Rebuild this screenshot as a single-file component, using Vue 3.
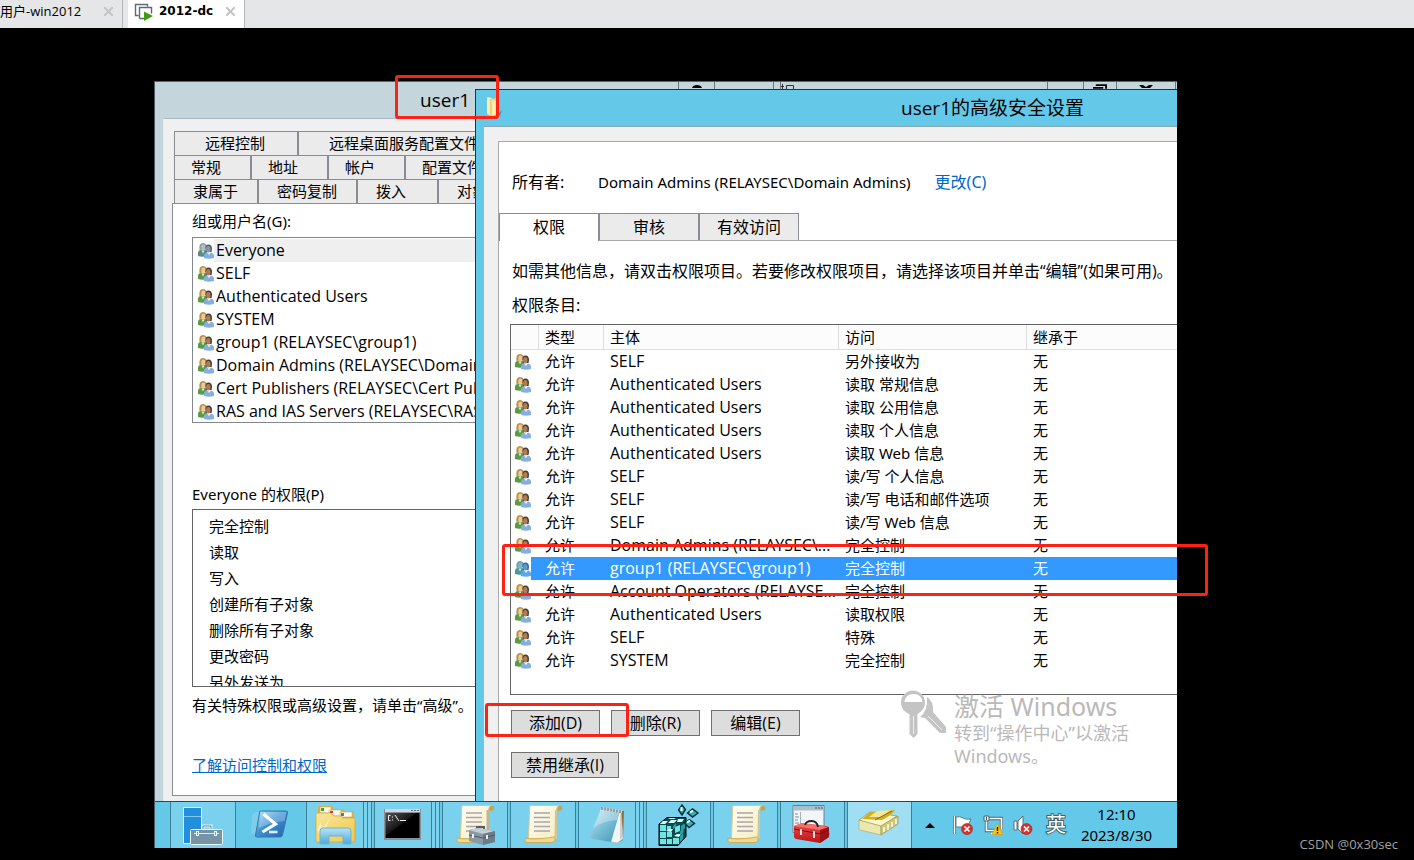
<script setup>
const groups = [
  'Everyone',
  'SELF',
  'Authenticated Users',
  'SYSTEM',
  'group1 (RELAYSEC\\group1)',
  'Domain Admins (RELAYSEC\\Domain',
  'Cert Publishers (RELAYSEC\\Cert Pub',
  'RAS and IAS Servers (RELAYSEC\\RAS'
]

const permissions = ['完全控制', '读取', '写入', '创建所有子对象', '删除所有子对象', '更改密码', '另外发送为']

const propertyTabs = [
  [{ t: '远程控制', c: 'w124' }, { t: '远程桌面服务配置文件', c: 'rest' }],
  [{ t: '常规', c: 'w77' }, { t: '地址', c: 'w77' }, { t: '帐户', c: 'w77' }, { t: '配置文件', c: 'rest' }],
  [{ t: '隶属于', c: 'w84' }, { t: '密码复制', c: 'w99' }, { t: '拨入', c: 'w81' }, { t: '对象', c: 'rest' }]
]

const securityTabs = ['权限', '审核', '有效访问']

const entries = [
  ['SELF', '另外接收为'],
  ['Authenticated Users', '读取 常规信息'],
  ['Authenticated Users', '读取 公用信息'],
  ['Authenticated Users', '读取 个人信息'],
  ['Authenticated Users', '读取 Web 信息'],
  ['SELF', '读/写 个人信息'],
  ['SELF', '读/写 电话和邮件选项'],
  ['SELF', '读/写 Web 信息'],
  ['Domain Admins (RELAYSEC\\...', '完全控制'],
  ['group1 (RELAYSEC\\group1)', '完全控制'],
  ['Account Operators (RELAYSE...', '完全控制'],
  ['Authenticated Users', '读取权限'],
  ['SELF', '特殊'],
  ['SYSTEM', '完全控制']
]
const selectedEntry = 9

const tasks = [
  { icon: 'i-server', label: '服务器管理器', c: 'wide' },
  { icon: 'i-shell', label: 'Windows PowerShell', c: 'pinned' },
  { icon: 'i-folder', label: '文件资源管理器', c: 'narrow', stack: true },
  { icon: 'i-term', label: '命令提示符', c: 'narrow', stack: true },
  { icon: 'i-script', label: '组策略管理', c: 'wide' },
  { icon: 'i-paper', label: '组策略编辑器', c: 'wide' },
  { icon: 'i-note', label: '记事本', c: 'narrow', stack: true },
  { icon: 'i-reg', label: '注册表编辑器', c: '' },
  { icon: 'i-paper', label: '组策略编辑器', c: '' },
  { icon: 'i-mmc', label: '管理控制台', c: '' },
  { icon: 'i-adsi', label: 'Active Directory 用户和计算机', c: 'active' }
]
</script>

<template>
  <div class="app">
    <svg class="defs" aria-hidden="true">
      <defs>
        <linearGradient id="g-shell" x1="0" y1="0" x2="1" y2="1">
          <stop offset="0" stop-color="#a9dcf5" /><stop offset=".45" stop-color="#3f93d2" /><stop offset="1" stop-color="#1e5fae" />
        </linearGradient>
        <linearGradient id="g-folder" x1="0" y1="0" x2="1" y2="1">
          <stop offset="0" stop-color="#f8e79a" /><stop offset="1" stop-color="#eec850" />
        </linearGradient>
        <linearGradient id="g-holder" x1="0" y1="0" x2="0" y2="1">
          <stop offset="0" stop-color="#b9e3f2" /><stop offset="1" stop-color="#4ba9dc" />
        </linearGradient>
        <linearGradient id="g-paper" x1="0" y1="0" x2="1" y2="1">
          <stop offset="0" stop-color="#fffef4" /><stop offset="1" stop-color="#f6edc0" />
        </linearGradient>
        <linearGradient id="g-note" x1="0" y1="0" x2="1" y2="1">
          <stop offset="0" stop-color="#d6eff5" /><stop offset=".5" stop-color="#7cc0d6" /><stop offset="1" stop-color="#3f93b5" />
        </linearGradient>
        <linearGradient id="g-red" x1="0" y1="0" x2="0" y2="1">
          <stop offset="0" stop-color="#ee4a44" /><stop offset="1" stop-color="#b9151b" />
        </linearGradient>
        <linearGradient id="g-term" x1="0" y1="0" x2="1" y2="1">
          <stop offset="0" stop-color="#555" /><stop offset=".45" stop-color="#161616" /><stop offset=".46" stop-color="#000" />
        </linearGradient>
      </defs>
      <symbol id="i-users" viewBox="0 0 16 16">
        <path class="shirt-a" d="M0 13V10q0-3 3-3h4q2 0 2 3v3q-5 1.500-9 0z" />
        <path d="M3.500 7.500l1.500 3 1.500-3z" fill="#e4ecd6" />
        <path class="hair-a" d="M1.500 7Q.5 0 5 0t4 6z" />
        <ellipse class="skin-a" cx="5.400" cy="4.500" rx="2.100" ry="3" />
        <path class="hair-b" d="M7.500 6Q7 1.500 10.500 1.500T14 6l-.5 3H8z" />
        <ellipse class="skin-b" cx="10.300" cy="6.300" rx="2.200" ry="3.200" />
        <path class="shirt-b" d="M6 15v-2.500q0-2.500 3-3l2 1.500 2-1.500q3 .5 3 3.500v2q-5 1.500-10 0z" />
        <path d="M9.500 9.700l1.500 2.500 1.500-2.500-1.500 1z" fill="#eef5fc" />
      </symbol>
      <symbol id="i-server" viewBox="0 0 46 46">
        <path d="M3.500 5.500h18v36h-18z" fill="#218fdc" stroke="#d5f0fa" />
        <path d="M4 14.500h17" stroke="#7ccaf2" />
        <path d="M23 27v-3h8v3" fill="none" stroke="#e8f4f8" stroke-width="3" />
        <path d="M23 27v-3h8v3" fill="none" stroke="#66879a" />
        <rect x="10.500" y="27.500" width="32" height="15" rx="1" fill="#7594a8" stroke="#eef7fa" />
        <path d="M14 31.500h25" stroke="#dce9ef" />
        <path d="M17.500 29v5M35.500 29v5" stroke="#e9fbff" stroke-width="3" />
        <path d="M17.500 30v3M35.500 30v3" stroke="#57a9c9" />
      </symbol>
      <symbol id="i-shell" viewBox="0 0 46 46">
        <path d="M4 13q3-3 7-3l-3 22q-3 1-5-1z" fill="#8ed0ee" opacity=".6" />
        <path d="M12 9h26q2 0 1.500 2l-5 22q-.5 2-2.500 2h-23q-2 0-1.500-2l4-22q.3-2 .5-2z" fill="url(#g-shell)" stroke="#3978a8" />
        <path d="M12.500 10h26l-2 9q-12 1-26 7z" fill="#fff" opacity=".25" />
        <path d="M15.500 12l12 10-13 8" fill="none" stroke="#fff" stroke-width="3.200" />
        <path d="M21 30h8.500" stroke="#d7eefb" stroke-width="2.600" />
      </symbol>
      <symbol id="i-folder" viewBox="0 0 46 46">
        <path d="M6 11V5q0-1 1-1h13l2 3h9l2 2h8q1 0 1 1v8H6z" fill="#dcae3f" />
        <path d="M8 5h11v6H8zM17 8h12v6H17zM28 10h12v5H28z" fill="#fffdf0" stroke="#d3b15b" stroke-width=".7" />
        <path d="M9 6h3v3H9z" fill="#2ca84a" /><path d="M18 9h3v2h-3z" fill="#e2322e" /><path d="M29 11h3v3h-3z" fill="#2787c8" />
        <path d="M4 12q0-1 1-1h14l3 3h7l2 2h11q1 0 1 1v22q0 1-1 1H5q-1 0-1-1z" fill="url(#g-folder)" stroke="#cfa139" stroke-width=".7" />
        <path d="M5 28l4-8 1 7 8-11-5 12 6-2-11 6z" fill="#fff8cf" opacity=".7" />
        <path d="M8 42V29q0-3 3-3h25q3 0 3 3v13h-8v-8H17v8z" fill="url(#g-holder)" stroke="#6fb3d2" />
      </symbol>
      <symbol id="i-term" viewBox="0 0 46 46">
        <path d="M4 7h37v31H4z" fill="#8a8f98" /><path d="M5 7h35v3H5z" fill="#d3d6dd" />
        <path d="M31 8.500h2M34 8.500h2M37 8.500h2" stroke="#63697a" />
        <path d="M5.500 11h34v25h-34z" fill="url(#g-term)" />
        <path d="M10.500 13.500h-2v5h2M12.500 14.500v1M12.500 17.500v1M15 13l4 6M20 18.500h6" fill="none" stroke="#eee" />
      </symbol>
      <symbol id="i-paper" viewBox="0 0 46 46">
        <path d="M36 4h4q3 0 2 4l-4 1z" fill="#c8a24a" />
        <path d="M10 3.500h29q-2.500 1-2.500 5v28h-28l1-26q0-6 .5-7z" fill="url(#g-paper)" stroke="#dcc98b" />
        <path d="M35 8h1.500v27H34.500z" fill="#cfc2a0" />
        <path d="M5 36q8 2 26-.5V35h4v4l-3 1.500H7q-2 0-2-2z" fill="#f0d987" stroke="#c6a356" stroke-width=".8" />
        <path d="M14 11h16M14 15.500h16M14 20h16M14 24.500h16M14 29h16" stroke="#aaa4ae" stroke-width="1.600" />
      </symbol>
      <symbol id="i-script" viewBox="0 0 46 46">
        <path d="M36 4h4q3 0 2 4l-4 1z" fill="#c8a24a" />
        <path d="M10 3.500h29q-2.500 1-2.500 5v28h-28l1-26q0-6 .5-7z" fill="url(#g-paper)" stroke="#dcc98b" />
        <path d="M34.500 8h3v27h-3z" fill="#bfb496" />
        <path d="M5 36q8 2 26-.5V35h4v4l-3 1.500H7q-2 0-2-2z" fill="#f0d987" stroke="#c6a356" stroke-width=".8" />
        <path d="M14 11h16M14 15.500h16M14 20h16M14 24.500h16M14 29h6" stroke="#aaa4ae" stroke-width="1.600" />
        <path d="M25 29v-4h7v3" fill="none" stroke="#555e66" stroke-width="2" />
        <path d="M17 28l9-2 17 3v11l-12 3-14-4z" fill="#8a99a5" />
        <path d="M17 28l9-2 17 3-12 3z" fill="#c3cdd4" /><path d="M31 32l12-3v11l-12 3z" fill="#6c7b88" />
        <path d="M17 33l14 3 12-3" fill="none" stroke="#4e5963" /><path d="M21 32v4M35 33v4" stroke="#eef2f4" stroke-width="2" />
      </symbol>
      <symbol id="i-note" viewBox="0 0 46 46">
        <path d="M34 9h6l-1 29-4 2z" fill="#9b6d2e" />
        <path d="M18 8l19 2 2 27-6 4-15-3z" fill="#f2f5f6" stroke="#a9b6bd" stroke-width=".7" />
        <path d="M36 14v24l2-2-1-24z" fill="#c5ccd0" />
        <path d="M17 6l19 3-9 31-23-4q8-12 13-30z" fill="url(#g-note)" />
        <path d="M17 6l19 3-3 9q-14 1-24 8z" fill="#fff" opacity=".3" />
        <path d="M17 5l21 3v3l-21-3z" fill="#d5d8d9" />
        <path d="M18 5v3M21 5.500v3M24 6v3M27 6.500v3M30 7v3M33 7.500v3M36 8v3" stroke="#5a6265" />
      </symbol>
      <symbol id="i-reg" viewBox="0 0 46 46">
        <path d="M3 22l8-6.500h19v19L22 43.500H3z" fill="#0d4a50" stroke="#000" />
        <g fill="#6fe6e2">
          <path d="M4 23h6v6H4zM4 30h6v6H4zM4 37h6v5H4zM11 30h5v5h-5zM11 37h5v5h-5zM17 36h6v6h-6zM11 24h4v4h-4z" />
          <path d="M19 25l5-2v6l-5 2z" />
        </g>
        <g fill="#d6fffc"><path d="M4 22l3-3h5l-3 3zM12 21l3-3h6l-3 3zM12 17l2-1h6l-2 1zM22 17h6l-2 3h-5zM10 29l3-2h4l-2 3zM18 34l3-2h4l-2 3z" /></g>
        <g fill="#23a3a8"><path d="M24 34l3-3v6l-3 3zM25 24l4-3v5l-4 3zM17 24l3-3v4l-3 2zM24 29l4-2-1 4-3 2z" /></g>
        <g fill="#2fb3ba" stroke="#0b2b33" stroke-width="1.400">
          <path d="M26 3l3.500 4.500L26 13l-3.500-5z" /><path d="M31.500 11l5-4 5.500 4-5.500 4z" /><path d="M28.500 21l5-3.500 5 4-5.500 4z" />
        </g>
        <path d="M25.500 5v4M34 10.500l3-2M31 20.500l3-2" stroke="#eaffff" stroke-width="2" />
      </symbol>
      <symbol id="i-mmc" viewBox="0 0 46 46">
        <path d="M3 3.500h31v27H3z" fill="#f3f6f9" stroke="#6d7f91" />
        <path d="M3.500 4h30v4.500h-30z" fill="#aebccb" /><path d="M25 6h2M28 6h2M31 6h2" stroke="#4b5968" />
        <path d="M10.500 10v20" stroke="#a8b4bf" /><path d="M5 12h3M5 15h4M5 18h3M5 21h4" stroke="#7c8a97" />
        <path d="M36 29q6 1 3 5l-6 4z" fill="#2e7896" opacity=".5" />
        <path d="M4 24l8-3 25 3q2 1 2 2v9l-9 6-24-4q-2-1-2-2z" fill="url(#g-red)" />
        <path d="M4 24l8-3 26 4-8 3z" fill="#f4716a" /><path d="M30 28l9-3v10l-9 6z" fill="#9f1118" />
        <path d="M15 23q1-4 6.500-4t6.500 6" fill="none" stroke="#222" stroke-width="1.800" />
        <path d="M4 27l26 5 9-4" fill="none" stroke="#7d0c12" /><path d="M11 27v6M24 29v7" stroke="#e5dcdc" stroke-width="2" />
      </symbol>
      <symbol id="i-adsi" viewBox="0 0 46 46">
        <path d="M2 18l22 5v10L3 28q-1 0-1-1z" fill="#ece7ae" stroke="#b5ac66" stroke-width=".7" />
        <path d="M24 23l17-9v8L24 33z" fill="#cfc77c" stroke="#a1974e" stroke-width=".7" />
        <path d="M2 18L13 10l27 4-16 10z" fill="#fbf7cc" stroke="#9e913d" stroke-width=".7" />
        <path d="M5 17l8-7 25-2q-3 5-13 10z" fill="#d3ae1c" /><path d="M12 15l8-6 14-1-10 7z" fill="#f3e59b" />
        <path d="M18 18l17-9" stroke="#82701a" /><path d="M27 25v5M31 22v6M35 20v5M39 17v5" stroke="#fffde4" stroke-width="1.500" />
      </symbol>
    </svg>

    <nav class="strip" aria-label="虚拟机">
      <div class="vm vm-rest"><a href="#">用户-win2012</a><button class="close" aria-label="关闭"><svg viewBox="0 0 9 9"><path d="M0 0l9 9M9 0L0 9" /></svg></button></div>
      <div class="vm vm-on">
        <svg class="vm-icon" viewBox="0 0 20 20" aria-hidden="true">
          <path d="M4.500 13.500H1.500V2.500h12v2M5.500 16.500h5M5.500 16.500V5.500h12v6" fill="none" stroke="#5d6b76" stroke-width="1.400" />
          <path d="M10 9.500l9 4.500-9 5z" fill="#3f9c14" />
        </svg>
        <a href="#">2012-dc</a><button class="close" aria-label="关闭"><svg viewBox="0 0 9 9"><path d="M0 0l9 9M9 0L0 9" /></svg></button>
      </div>
    </nav>

    <main class="stage">
      <div class="screen">
        <div class="desktop">
          <section class="back">
            <header class="back-title">
              <h1>user1</h1>
              <span class="cap c36"><svg viewBox="0 0 14 3"><path d="M2 3q1-3 5-3t5 3z" /></svg></span>
              <span class="cap c59"></span><span class="cap c7"></span>
              <span class="cap grow"><svg viewBox="0 0 14 6" class="left"><path d="M1.500 1v5M5.500 6V2.500h7V6M0 3.500h3" fill="none" stroke="#333" /></svg></span>
              <span class="cap c36"></span>
              <span class="cap c33"><svg viewBox="0 0 15 5"><path d="M3 1h11v4M0 4h11" fill="none" stroke="#000" stroke-width="2" /></svg></span>
              <span class="cap c59"><svg viewBox="0 0 14 3"><path d="M0 0h4l3 2 3-2h4l-3 3H3z" /></svg></span>
              <span class="cap c2"></span>
            </header>
            <div class="back-body">
              <div class="rows" role="tablist">
                <div v-for="(row, i) in propertyTabs" :key="i" class="row">
                  <button v-for="tab in row" :key="tab.t" role="tab" class="ptab" :class="[tab.c, 'r' + i]">{{ tab.t }}</button>
                </div>
              </div>
              <div class="sheet">
                <h2>组或用户名(G):</h2>
                <ul class="groups">
                  <li v-for="(g, i) in groups" :key="g" :class="{ dim: i === 0 }">
                    <svg class="users" aria-hidden="true"><use href="#i-users" /></svg><span>{{ g }}</span>
                  </li>
                </ul>
                <h2 class="perm-title">Everyone 的权限(P)</h2>
                <ul class="perms"><li v-for="p in permissions" :key="p">{{ p }}</li></ul>
                <p class="hint">有关特殊权限或高级设置，请单击“高级”。</p>
                <a href="#" class="learn">了解访问控制和权限</a>
              </div>
            </div>
          </section>

          <section class="front">
            <header class="front-title">
              <svg class="title-icon" viewBox="0 0 16 22" aria-hidden="true">
                <path d="M11 19l5-5-2 6z" fill="#4c8ca5" /><path d="M1 1l5 1v18l-5-2z" fill="#f9edb0" /><path d="M4 3l8-1v15l-6 4-2-1z" fill="#ecd27a" /><path d="M6 4l4 1v13l-4 2z" fill="#faeeae" />
              </svg>
              <h1>user1的高级安全设置</h1>
            </header>
            <div class="front-body">
              <div class="panel">
                <p class="owner"><span class="owner-label">所有者:</span><span>Domain Admins (RELAYSEC\Domain Admins)</span><a href="#">更改(C)</a></p>
                <div class="stabs" role="tablist">
                  <button v-for="(s, i) in securityTabs" :key="s" role="tab" :class="{ on: i === 0 }">{{ s }}</button>
                </div>
                <div class="content">
                  <p class="info">如需其他信息，请双击权限项目。若要修改权限项目，请选择该项目并单击“编辑”(如果可用)。</p>
                  <h2>权限条目:</h2>
                  <div class="grid">
                    <table>
                      <colgroup><col class="k1" /><col class="k2" /><col class="k3" /><col class="k4" /><col /></colgroup>
                      <thead><tr><th></th><th>类型</th><th>主体</th><th>访问</th><th>继承于</th></tr></thead>
                      <tbody>
                        <tr v-for="(e, i) in entries" :key="i" :class="{ sel: i === selectedEntry }">
                          <td><svg class="users" aria-hidden="true"><use href="#i-users" /></svg></td>
                          <td>允许</td><td class="name">{{ e[0] }}</td><td>{{ e[1] }}</td><td>无</td>
                        </tr>
                      </tbody>
                    </table>
                  </div>
                  <div class="actions"><button>添加(D)</button><button>删除(R)</button><button>编辑(E)</button></div>
                  <div class="actions"><button class="long">禁用继承(I)</button></div>
                </div>
              </div>
            </div>
          </section>

          <aside class="activate">
            <svg viewBox="0 0 46 48" aria-hidden="true">
              <circle cx="12" cy="12.500" r="12" fill="#c4c4c4" /><path d="M8.500 22h8v22l-4 4-4-4z" fill="#c4c4c4" />
              <path d="M3.500 12q1-8 9-8t9 8z" fill="#fff" />
              <path d="M12.500 26v18" stroke="#eee" />
              <path d="M26 7q7 4 6 15l13 15v6h-6L24 28l-5-1q8-6 7-20z" fill="#c4c4c4" /><path d="M27 26l14 14" stroke="#eee" />
            </svg>
            <div><strong>激活 Windows</strong><p>转到“操作中心”以激活<br />Windows。</p></div>
          </aside>
        </div>

        <footer class="taskbar">
          <div class="tasks">
            <template v-for="(t, i) in tasks" :key="i">
              <div class="task-group">
                <button class="task" :class="t.c" :aria-label="t.label"><svg aria-hidden="true"><use :href="'#' + t.icon" /></svg></button>
                <template v-if="t.stack"><i class="stack"></i><i class="stack"></i></template>
              </div>
            </template>
          </div>
          <div class="tray">
            <button class="up" aria-label="显示隐藏的图标"><svg viewBox="0 0 10 5"><path d="M0 5l5-5 5 5z" /></svg></button>
            <button aria-label="操作中心"><svg viewBox="0 0 20 20">
              <path d="M1.500 1v18" stroke="#4a6570" stroke-width="3" /><path d="M1.500 1v18" stroke="#fff" stroke-width="1.500" />
              <path d="M3 2q4-1 7 1t8 1l-2 5 1 3H3z" fill="#fff" stroke="#4a6570" stroke-width=".8" />
              <circle cx="14" cy="14" r="5.500" fill="#d9302c" stroke="#a51f1d" stroke-width=".6" /><path d="M11.500 11.500l5 5M16.500 11.500l-5 5" stroke="#fff" stroke-width="1.700" />
            </svg></button>
            <button aria-label="网络"><svg viewBox="0 0 20 20">
              <path d="M3.500 6v9.500h8M6 3.500h12.500V14" fill="none" stroke="#4a6570" stroke-width="3.400" /><path d="M3.500 6v9.500h8M6 3.500h12.500V14M8 18.500h4" fill="none" stroke="#fff" stroke-width="1.700" />
              <rect x="1" y="1" width="5" height="5" rx="1" fill="#e8f7fb" stroke="#3f5862" /><path d="M3.500 2v3" stroke="#3f5862" />
              <path d="M14.500 8.500l5.500 11H9z" fill="#fcc410" stroke="#d39b0a" stroke-width=".6" /><path d="M14.500 12v4M14.500 17v1.500" stroke="#2a1d00" stroke-width="1.500" />
            </svg></button>
            <button aria-label="音量"><svg viewBox="0 0 20 20">
              <path d="M1 6h3v9H1zM5 6l5-5v18l-5-5z" fill="#fff" stroke="#4a6570" stroke-width=".9" />
              <circle cx="13.500" cy="14" r="5.500" fill="#d9302c" stroke="#a51f1d" stroke-width=".6" /><path d="M11 11.500l5 5M16 11.500l-5 5" stroke="#fff" stroke-width="1.700" />
            </svg></button>
            <button class="ime">英</button>
            <time class="clock"><span>12:10</span><span>2023/8/30</span></time>
          </div>
        </footer>
      </div>
      <i class="mark mark-title"></i><i class="mark mark-row"></i><i class="mark mark-add"></i>
      <span class="credit">CSDN @0x30sec</span>
    </main>
  </div>
</template>

<style>
body { margin: 0; background: #000; }
</style>

<style scoped>
.app { display: flex; flex-direction: column; min-height: 100vh; overflow: hidden; background: #000; color: #000; font: 15px/23px "Noto Sans", "Noto Sans CJK SC", sans-serif; }
.app * { box-sizing: border-box; }
.defs { position: absolute; width: 0; height: 0; }
button { margin: 0; padding: 0; border: 0; background: none; color: inherit; font: inherit; }
h1, h2, p, ul { margin: 0; padding: 0; font: inherit; list-style: none; }
h1, .actions button, .info, .strip, .credit, .groups, .name { font-family: "Open Sans", "Noto Sans CJK SC", sans-serif; }
a { color: #0066cc; text-decoration: none; }

.strip { display: flex; height: 28px; background: #e5e6e8; font-size: 13px; }
.vm { display: flex; align-items: center; height: 28px; padding-bottom: 5px; }
.vm a { color: #000; white-space: nowrap; }
.vm-rest { width: 123px; border-right: 1px solid #b4b6ba; }
.vm-rest a { flex: 1; }
.vm-on { width: 117px; margin-left: 5px; padding-left: 6px; background: #fff; border-right: 1px solid #b4b6ba; }
.vm-on a { flex: 1; margin-left: 5px; font-family: "DejaVu Sans", sans-serif; font-size: 12px; font-weight: 700; line-height: 25px; }
.vm-icon { width: 20px; height: 20px; }
.close { width: 9px; height: 9px; margin-right: 9px; line-height: 0; }
.close svg { width: 9px; height: 9px; stroke: #c3c4c6; stroke-width: 2; }

.stage { position: relative; flex: 1; display: flex; padding: 53px 237px 12px 154px; }
.screen { flex: 1; display: flex; flex-direction: column; min-width: 0; border-left: 1px solid #4c5a60; overflow: hidden; }
.desktop { position: relative; flex: 1; min-height: 720px; overflow: hidden; background: #c4d6dc; }

.back { display: flex; flex-direction: column; height: 720px; border-top: 1px solid #5a6468; background: #c4d6dc; }
.back-title { display: flex; height: 36px; }
.back-title h1 { width: 523px; padding-left: 265px; font-size: 19px; line-height: 37px; }
.cap { display: flex; justify-content: center; align-items: flex-end; height: 7px; border-left: 1px solid #66757b; }
.cap svg { width: 14px; height: 5px; }
.cap .left { margin-right: auto; height: 6px; }
.c36 { width: 36px; } .c59 { width: 59px; } .c7 { width: 7px; } .c33 { width: 33px; } .c2 { width: 2px; }
.grow { flex: 1; }
.back-body { flex: 1; margin-left: 8px; padding: 12px 0 5px 9px; border-top: 1px solid #aab9bf; border-left: 1px solid #e4eaec; background: #f0f0f0; }
.rows { margin-left: 1px; }
.row { display: flex; width: 420px; height: 24px; }
.ptab { height: 24px; border: 1px solid #898c95; border-bottom: 0; background: #ebebeb; line-height: 23px; text-align: left; white-space: nowrap; }
.r0 { padding-left: 30px; } .r1 { padding-left: 16px; } .r2 { padding-left: 18px; }
.w124 { width: 124px; } .w77 { width: 77px; } .w84 { width: 84px; } .w99 { width: 99px; } .w81 { width: 81px; }
.rest { flex: 1; }
.sheet { height: 593px; padding: 6px 0 0 19px; border: 1px solid #898c95; background: #fff; margin-left: -1px; }
.groups { height: 186px; margin-top: 4px; padding: 1px 0 0 5px; border: 1px solid #828790; overflow: hidden; font-size: 16px; }
.groups li { display: flex; align-items: center; height: 23px; white-space: nowrap; }
.groups span { flex: 1; padding-left: 2px; line-height: 23px; }
.dim span { background: #efefef; }
.users { display: block; width: 16px; height: 16px; --ha: #b98f45; --sa: #ecca98; --ta: #5c9a45; --hb: #4a3a30; --sb: #b07c58; --tb: #86aede; }
.dim .users { --ha: #8aa09c; --sa: #b3bfbc; --ta: #5b8c84; --hb: #4c5f72; --sb: #8c96a3; --tb: #7bb0e6; }
.hair-a { fill: var(--ha); } .skin-a { fill: var(--sa); } .shirt-a { fill: var(--ta); }
.hair-b { fill: var(--hb); } .skin-b { fill: var(--sb); } .shirt-b { fill: var(--tb); }
.perm-title { margin-top: 60px; }
.perms { height: 178px; margin-top: 3px; padding: 3px 0 0 16px; border: 1px solid #646464; overflow: hidden; }
.perms li { height: 26px; line-height: 26px; }
.hint { margin-top: 7px; }
.learn { display: inline-block; margin-top: 37px; text-decoration: underline; }

.front { position: absolute; top: 8px; left: 320px; right: -332px; bottom: 0; display: flex; flex-direction: column; border-top: 1px solid #20343c; border-left: 1px solid #20343c; background: #64c9e9; }
.front-title { position: relative; height: 36px; text-align: center; }
.front-title h1 { font-size: 19px; line-height: 36px; }
.title-icon { position: absolute; left: 10px; top: 6px; width: 16px; height: 22px; }
.front-body { flex: 1; margin-left: 8px; padding: 14px 0 0 14px; border-top: 1px solid #88a6b2; background: #f0f0f0; }
.panel { height: 100%; border-top: 1px solid #aaa; border-left: 1px solid #aaa; background: #fff; font-size: 16px; line-height: 24px; }
.owner { display: flex; padding: 28px 0 0 13px; font-size: 15px; }
.owner-label { width: 86px; font-size: 16px; }
.owner a { margin-left: 24px; font-size: 16px; }
.stabs { display: flex; height: 28px; margin-top: 19px; border-bottom: 1px solid #aaa; }
.stabs button { width: 100px; height: 27px; border: 1px solid #898c95; border-bottom: 0; background: #ebebeb; font-size: 16px; line-height: 24px; }
.stabs .on { height: 28px; background: #fff; line-height: 27px; }
.content { padding: 18px 0 0 12px; }
.content .info, .content h2 { padding-left: 1px; }
.content h2 { margin-top: 10px; }
.grid { height: 371px; margin-top: 7px; margin-left: -1px; border: 1px solid #646464; overflow: hidden; font-size: 15px; line-height: 23px; }
table { width: 100%; table-layout: fixed; border-collapse: separate; border-spacing: 0; }
.k1 { width: 28px; } .k2 { width: 65px; } .k3 { width: 235px; } .k4 { width: 188px; }
th { height: 25px; padding: 0 6px; background: #fcfcfc; border-right: 1px solid #dedede; border-bottom: 1px solid #dedede; font-weight: 400; text-align: left; line-height: 24px; }
td { height: 23px; padding: 0 6px; white-space: nowrap; line-height: 23px; vertical-align: middle; }
.name { font-size: 16px; }
td:first-child { padding: 0 0 0 4px; }
.sel td { background: #3399ff; color: #fff; }
.sel td:first-child { background: linear-gradient(to right, #fff 20px, #3399ff 20px); }
.sel .users { --ha: #6aa79f; --sa: #7db5d8; --ta: #4897a5; --hb: #2f6ba8; --sb: #6098cc; --tb: #5aa6ef; }
.actions { display: flex; gap: 11px; margin-top: 15px; }
.actions button { width: 89px; height: 26px; border: 1px solid #707070; background: #ddd; font-size: 16px; line-height: 24px; }
.actions .long { width: 108px; }
.actions + .actions { margin-top: 16px; }

.activate { position: absolute; left: 746px; top: 609px; display: flex; gap: 7px; color: #b9b9b9; font-size: 18px; line-height: 23px; }
.activate svg { width: 46px; height: 48px; }
.activate strong { display: block; font-size: 25px; font-weight: 400; line-height: 32px; }

.taskbar { display: flex; height: 47px; border-top: 1px solid #2c4650; background: #64c9e9; }
.tasks { display: flex; gap: 2px; padding-left: 15px; }
.task-group { display: flex; }
.task { display: flex; justify-content: center; width: 65px; height: 46px; border: solid #3c7f97; border-width: 0 1px; background: #7ad1ed; }
.task svg { flex: none; width: 46px; height: 46px; }
.wide { width: 66px; } .narrow { width: 58px; }
.pinned { width: 66px; border-color: transparent; background: none; }
.active { background: #a0def3; }
.stack { width: 4px; border-right: 1px solid #3c7f97; background: #7ad1ed; }
.tray { display: flex; align-items: center; margin-left: auto; padding: 0 23px 0 0; }
.tray button { width: 20px; height: 20px; margin-right: 10px; line-height: 0; }
.tray button svg { width: 20px; height: 20px; }
.tray .up { display: flex; align-items: center; width: 10px; margin-right: 18px; }
.tray .up svg { width: 10px; height: 5px; }
.tray .ime { width: 20px; margin: 0 13px 0 3px; color: #fff; font-size: 20px; line-height: 20px; -webkit-text-stroke: 2px #44626d; paint-order: stroke fill; }
.clock { display: flex; flex-direction: column; width: 75px; text-align: center; line-height: 21px; }

.mark { position: absolute; border: 3px solid #ff2114; border-radius: 3px; pointer-events: none; }
.mark-title { left: 395px; top: 47px; width: 104px; height: 44px; }
.mark-row { left: 502px; top: 516px; width: 706px; height: 52px; }
.mark-add { left: 485px; top: 675px; width: 144px; height: 34px; }
.credit { position: absolute; right: 16px; bottom: 5px; color: #a2a2a2; font-size: 13px; line-height: 22px; }
</style>
